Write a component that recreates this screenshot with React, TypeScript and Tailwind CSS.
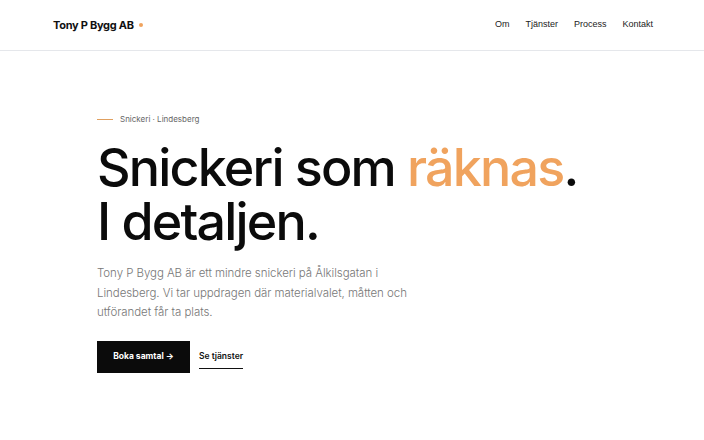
export default function App() {
  return (
    <div className="min-h-screen w-full bg-white" style={{ fontFamily: 'Inter, "Liberation Sans", sans-serif' }}>
      {/* Header */}
      <header className="border-b border-gray-200">
        <div className="h-[50px] pl-[53px] pr-[51px] flex items-center justify-between">
          <div className="flex items-center gap-[5px]">
            <span className="text-[11px] font-bold text-[#111] tracking-tight">Tony P Bygg AB</span>
            <span className="w-[4px] h-[4px] rounded-full bg-[#f0a35e]" />
          </div>
          <nav className="flex items-center gap-[16px] text-[9px] text-[#222]" style={{ fontFamily: '"Liberation Sans", Arial, sans-serif' }}>
            <a href="#om">Om</a>
            <a href="#tjanster">Tjänster</a>
            <a href="#process">Process</a>
            <a href="#kontakt">Kontakt</a>
          </nav>
        </div>
      </header>

      {/* Hero */}
      <main className="px-[97px] pt-[62px]">
        <div className="flex items-center gap-[7px]">
          <span className="w-[16px] h-px bg-[#e0a060]" />
          <span className="text-[8px] text-[#666]">Snickeri · Lindesberg</span>
        </div>

        <h1 className="mt-[16px] text-[52px] leading-[54px] font-medium tracking-[-0.035em] text-[#0b0b0b]">
          Snickeri som <span className="text-[#f0a35e]">räknas</span>.
          <br />
          I detaljen.
        </h1>

        <p className="mt-[15px] w-[314px] text-[11.5px] leading-[19.5px] font-light tracking-[-0.005em] text-[#777]">
          Tony P Bygg AB är ett mindre snickeri på Ålkilsgatan i Lindesberg. Vi tar uppdragen där materialvalet, måtten och utförandet får ta plats.
        </p>

        <div className="mt-[18px] flex items-center gap-[9px]">
          <a href="#kontakt" className="h-[32px] w-[93px] bg-[#0b0b0b] text-white text-[8.5px] font-bold flex items-center justify-center">
            Boka samtal →
          </a>
          <a href="#tjanster" className="whitespace-nowrap text-[8.5px] font-semibold text-[#111] pt-[6px] pb-[5px] border-b border-[#111]">
            Se tjänster
          </a>
        </div>
      </main>
    </div>
  );
}
